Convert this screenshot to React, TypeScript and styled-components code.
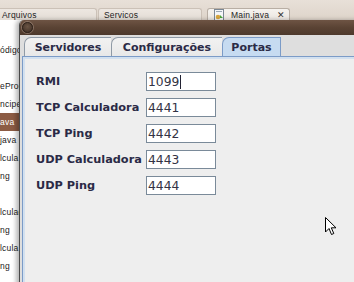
import React from "react";
import styled, { createGlobalStyle } from "styled-components";

const GlobalStyle = createGlobalStyle`
  html, body { margin: 0; padding: 0; overflow: hidden; background: #ffffff; }
`;

const Screen = styled.div`
  position: relative;
  width: 354px;
  height: 282px;
  overflow: hidden;
  background: #ffffff;
  font-family: "Liberation Sans", Arial, sans-serif;
`;

const IdeTop = styled.div`
  height: 20px;
  background: linear-gradient(#e8e0d8, #ded4ca);
  display: flex;
  align-items: flex-end;
`;

const IdeTabs = styled.div`
  display: flex;
  align-items: flex-end;
  gap: 1px;
  margin-left: -4px;
`;

const IdeTab = styled.div<{ $w: number; $gap?: number; $active?: boolean }>`
  width: ${(p) => p.$w}px;
  margin-left: ${(p) => p.$gap ?? 0}px;
  height: 12px;
  box-sizing: border-box;
  border: 1px solid ${(p) => (p.$active ? "#b8aea4" : "#cbc1b7")};
  border-bottom: none;
  border-radius: 3px 3px 0 0;
  background: ${(p) =>
    p.$active ? "linear-gradient(#f6f3ef, #ebe6e0)" : "linear-gradient(#ede7e1, #e3dcd5)"};
  display: flex;
  align-items: flex-end;
  gap: 6px;
  padding-left: 5px;
  font-size: 8.5px;
  line-height: 10px;
  color: #1e1e1e;
  letter-spacing: 0.2px;
`;

const CloseX = styled.span`
  margin-left: auto;
  margin-right: 4px;
  font-size: 9px;
  color: #333;
`;

const IdeBody = styled.div`
  display: flex;
`;

const FileList = styled.div`
  width: 19px;
  overflow: hidden;
  padding-top: 21px;
  display: flex;
  flex-direction: column;
`;

const FileRow = styled.div<{ $selected?: boolean }>`
  height: 18px;
  display: flex;
  align-items: center;
  font-size: 8.5px;
  letter-spacing: 0.2px;
  white-space: nowrap;
  color: ${(p) => (p.$selected ? "#ffffff" : "#1a1a1a")};
  background: ${(p) => (p.$selected ? "#8c5c44" : "transparent")};
`;

const DialogWindow = styled.div`
  position: absolute;
  left: 19px;
  top: 20px;
  width: 350px;
  height: 280px;
  display: flex;
  flex-direction: column;
  border-left: 1px solid #4a4a4a;
  border-radius: 5px 0 0 0;
  overflow: hidden;
  box-shadow: -3px 0 4px rgba(0, 0, 0, 0.28);
`;

const TitleBar = styled.div`
  height: 15px;
  flex: none;
  background: linear-gradient(#6e5444, #5a4334 50%, #4d392c);
  display: flex;
  align-items: center;
  padding-left: 2px;
`;

const TitleButton = styled.div`
  width: 11px;
  height: 11px;
  border-radius: 50%;
  box-sizing: border-box;
  border: 1px solid #2e221b;
  background: radial-gradient(circle at 50% 40%, #6b5545, #3d2d23);
  box-shadow: 0 0 0 1px rgba(170, 150, 135, 0.55);
`;

const DialogBody = styled.div`
  flex: 1;
  background: #dedede;
  padding: 2px 0 0 2px;
  display: flex;
  flex-direction: column;
`;

const TabRow = styled.div`
  display: flex;
  height: 19px;
  padding-left: 2px;
  flex: none;
`;

const Tab = styled.div<{ $selected?: boolean; $w: number }>`
  width: ${(p) => p.$w}px;
  box-sizing: border-box;
  border: 1px solid ${(p) => (p.$selected ? "#7b9bc7" : "#8f9aa6")};
  border-bottom: none;
  border-right-width: ${(p) => (p.$selected ? 1 : 0)}px;
  border-radius: 7px 0 0 0;
  background: ${(p) => (p.$selected ? "#c6dbf1" : "linear-gradient(#f2f2f2, #e8e8e8)")};
  display: flex;
  align-items: center;
  justify-content: center;
  font-family: "DejaVu Sans", Verdana, sans-serif;
  font-weight: bold;
  font-size: 11px;
  color: #2a2a46;
  padding-top: 1px;
`;

const Panel = styled.div`
  flex: 1;
  background: #eeeeee;
  border-top: 1px solid #7b9bc7;
  border-left: 1px solid #7b9bc7;
  box-shadow: inset 2px 2px 0 #d2e0ef;
  padding: 15px 0 0 13px;
`;

const FormGrid = styled.div`
  display: grid;
  grid-template-columns: 110px 70px;
  grid-auto-rows: 19px;
  row-gap: 7px;
`;

const Label = styled.label`
  display: flex;
  align-items: center;
  font-family: "DejaVu Sans", Verdana, sans-serif;
  font-weight: bold;
  font-size: 11.3px;
  color: #2a2a46;
  white-space: nowrap;
`;

const Field = styled.div`
  box-sizing: border-box;
  height: 19px;
  border: 1px solid #7a8a99;
  background: #ffffff;
  display: flex;
  align-items: center;
  padding-left: 1px;
  font-family: "DejaVu Sans", Verdana, sans-serif;
  font-size: 12.3px;
  color: #333344;
`;

const Caret = styled.span`
  display: inline-block;
  width: 1px;
  height: 14px;
  margin-left: 1px;
  background: #222233;
`;

const Pointer = styled.svg`
  position: absolute;
  left: 325px;
  top: 217px;
`;

const JavaIcon = () => (
  <svg width="12" height="12" viewBox="0 0 12 12" style={{ alignSelf: "center" }}>
    <rect x="1.5" y="0.5" width="9" height="11" fill="#f4f6f8" stroke="#7b8794" />
    <rect x="3" y="2" width="6" height="1" fill="#9aa7b4" />
    <circle cx="5" cy="8" r="2.3" fill="#d7a640" />
    <path d="M7 6 L10 9 L7 9 Z" fill="#4aa43a" />
  </svg>
);

const rows: { text: string; selected?: boolean }[] = [
  { text: "ódigo" },
  { text: "" },
  { text: "eProc" },
  { text: "ncipe" },
  { text: "ava", selected: true },
  { text: "java" },
  { text: "lcula" },
  { text: "ng" },
  { text: "" },
  { text: "lculad" },
  { text: "ng" },
  { text: "lcula" },
  { text: "ng" },
];

const fields = [
  { label: "RMI", value: "1099", focused: true },
  { label: "TCP Calculadora", value: "4441" },
  { label: "TCP Ping", value: "4442" },
  { label: "UDP Calculadora", value: "4443" },
  { label: "UDP Ping", value: "4444" },
];

export default function App() {
  return (
    <>
      <GlobalStyle />
      <Screen>
        <IdeTop>
          <IdeTabs>
            <IdeTab $w={101}>Arquivos</IdeTab>
            <IdeTab $w={104}>Servicos</IdeTab>
            <IdeTab $w={83} $gap={4} $active>
              <JavaIcon />
              Main.java
              <CloseX>✕</CloseX>
            </IdeTab>
          </IdeTabs>
        </IdeTop>
        <IdeBody>
          <FileList>
            {rows.map((r, i) => (
              <FileRow key={i} $selected={r.selected}>
                {r.text}
              </FileRow>
            ))}
          </FileList>
        </IdeBody>

        <DialogWindow>
          <TitleBar>
            <TitleButton />
          </TitleBar>
          <DialogBody>
            <TabRow>
              <Tab $w={87}>Servidores</Tab>
              <Tab $w={111}>Configurações</Tab>
              <Tab $w={59} $selected>
                Portas
              </Tab>
            </TabRow>
            <Panel>
              <FormGrid>
                {fields.map((f) => (
                  <React.Fragment key={f.label}>
                    <Label>{f.label}</Label>
                    <Field>
                      {f.value}
                      {f.focused && <Caret />}
                    </Field>
                  </React.Fragment>
                ))}
              </FormGrid>
            </Panel>
          </DialogBody>
        </DialogWindow>

        <Pointer width="12" height="19" viewBox="0 0 12 19">
          <path
            d="M0.5 0.5 L0.5 15 L4 11.5 L6.5 17.5 L8.8 16.5 L6.3 10.8 L11 10.8 Z"
            fill="#ffffff"
            stroke="#000000"
            strokeWidth="1"
            strokeLinejoin="miter"
          />
        </Pointer>
      </Screen>
    </>
  );
}
